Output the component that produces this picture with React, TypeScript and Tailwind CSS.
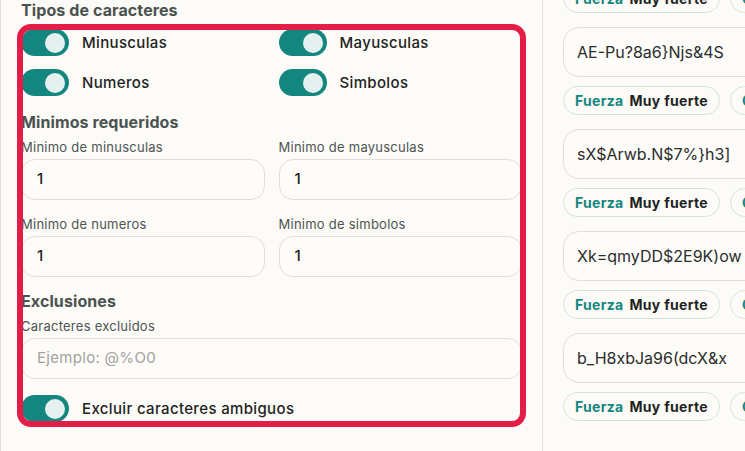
import React from 'react';

const Toggle: React.FC<{ label: string }> = ({ label }) => (
  <div className="flex items-center gap-[13px]">
    <div className="flex h-[27px] w-12 shrink-0 items-center justify-end rounded-full bg-[#13877f] pr-[4px]">
      <div className="h-5 w-5 rounded-full bg-[#e4f1ef]" />
    </div>
    <span className="text-[15px] font-medium leading-5 tracking-[0.35px] text-[#1e2322]">{label}</span>
  </div>
);

const Field: React.FC<{ label: string; value?: string; placeholder?: string }> = ({ label, value, placeholder }) => (
  <div className="flex flex-col">
    <span className="text-[13px] leading-[18px] tracking-[0.25px] text-[#4d5551]">{label}</span>
    <div className="mt-[3px] flex h-[41px] items-center rounded-[14px] border border-[#e2dfd6] bg-[#fdfcf9] px-[15px]">
      {value ? (
        <span className="text-[15px] font-medium text-[#1e2322]">{value}</span>
      ) : (
        <span className="text-[15px] tracking-[0.3px] text-[#a3a29d]">{placeholder}</span>
      )}
    </div>
  </div>
);

const passwords = ['AE-Pu?8a6}Njs&4S', 'sX$Arwb.N$7%}h3]', 'Xk=qmyDD$2E9K)ow', 'b_H8xbJa96(dcX&x'];

const Strength: React.FC = () => (
  <div className="flex gap-[10px]">
    <div className="flex h-[29px] shrink-0 items-center gap-[6px] rounded-full border border-[#cfe4e1] px-[11px] text-[14px] font-bold tracking-[0.3px]">
      <span className="text-[#13877f]">Fuerza</span>
      <span className="text-[#1e2322]">Muy fuerte</span>
    </div>
    <div className="flex h-[29px] shrink-0 items-center gap-[6px] rounded-full border border-[#cfe4e1] px-[11px] text-[14px] font-bold tracking-[0.3px]">
      <span className="text-[#13877f]">Caracteres</span>
      <span className="text-[#1e2322]">16</span>
    </div>
  </div>
);

export default function App() {
  return (
    <div className="flex h-[451px] w-[745px] overflow-hidden bg-[#fcfbf8] font-['Inter',sans-serif]">
      <div className="relative w-[543px] shrink-0 border-x border-[#e3e1d8] pl-5 pr-[20px]">
        <h3 className="text-[16px] font-bold leading-5 tracking-[0.1px] text-[#4a524f]">Tipos de caracteres</h3>
        <div className="mt-[9px] grid grid-cols-2 gap-x-[14px] gap-y-[13px]">
          <Toggle label="Minusculas" />
          <Toggle label="Mayusculas" />
          <Toggle label="Numeros" />
          <Toggle label="Simbolos" />
        </div>

        <h3 className="mt-4 text-[16px] font-bold leading-5 tracking-[0.1px] text-[#4a524f]">Minimos requeridos</h3>
        <div className="mt-[6px] grid grid-cols-2 gap-x-[14px] gap-y-[15px]">
          <Field label="Minimo de minusculas" value="1" />
          <Field label="Minimo de mayusculas" value="1" />
          <Field label="Minimo de numeros" value="1" />
          <Field label="Minimo de simbolos" value="1" />
        </div>

        <h3 className="mt-[14px] text-[16px] font-bold leading-5 tracking-[0.1px] text-[#4a524f]">Exclusiones</h3>
        <div className="mt-[6px]">
          <Field label="Caracteres excluidos" placeholder="Ejemplo: @%O0" />
        </div>
        <div className="mt-4">
          <Toggle label="Excluir caracteres ambiguos" />
        </div>

        {/* highlight overlay */}
        <div className="pointer-events-none absolute left-[16px] top-[24px] h-[403px] w-[509px] rounded-[14px] border-[6px] border-[#e11d48]" />
      </div>

      <div className="min-w-0 flex-1 overflow-hidden pl-5">
        <div className="-mt-4 flex flex-col">
          <Strength />
          {passwords.map((p) => (
            <div key={p} className="mt-[14px] flex flex-col">
              <div className="flex h-[50px] w-[400px] items-center rounded-[16px] border border-[#e2dfd6] bg-[#fdfcf9] pl-[13px]">
                <span className="text-[16px] text-[#2a2d2c]">{p}</span>
              </div>
              <div className="mt-[9px]">
                <Strength />
              </div>
            </div>
          ))}
        </div>
      </div>
    </div>
  );
}
